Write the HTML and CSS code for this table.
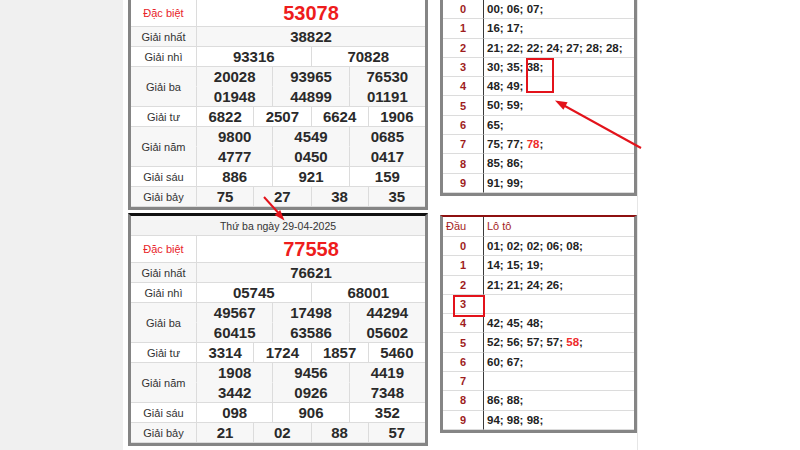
FILE: index.html
```html
<!DOCTYPE html>
<html lang="vi">
<head>
<meta charset="utf-8">
<title>Kết quả xổ số</title>
<link rel="stylesheet" href="styles.css">
</head>
<body>
<div class="screen">
  <aside class="gutter"></aside>
  <main class="content">
    <div class="col-left">
      <div class="kq kq-cut">
        <div class="c lbl red">Đặc biệt</div><div class="c s12 num-db">53078</div>
        <div class="c lbl alt">Giải nhất</div><div class="c s12 num alt">38822</div>
        <div class="c lbl">Giải nhì</div><div class="c s6 num">93316</div><div class="c s6 num">70828</div>
        <div class="c lbl r2 alt">Giải ba</div><div class="c s4 num alt nb">20028</div><div class="c s4 num alt nb">93965</div><div class="c s4 num alt nb">76530</div>
        <div class="c s4 num alt">01948</div><div class="c s4 num alt">44899</div><div class="c s4 num alt">01191</div>
        <div class="c lbl">Giải tư</div><div class="c s3 num">6822</div><div class="c s3 num">2507</div><div class="c s3 num">6624</div><div class="c s3 num">1906</div>
        <div class="c lbl r2 alt">Giải năm</div><div class="c s4 num alt nb">9800</div><div class="c s4 num alt nb">4549</div><div class="c s4 num alt nb">0685</div>
        <div class="c s4 num alt">4777</div><div class="c s4 num alt">0450</div><div class="c s4 num alt">0417</div>
        <div class="c lbl">Giải sáu</div><div class="c s4 num">886</div><div class="c s4 num">921</div><div class="c s4 num">159</div>
        <div class="c lbl alt">Giải bảy</div><div class="c s3 num alt">75</div><div class="c s3 num alt">27</div><div class="c s3 num alt">38</div><div class="c s3 num alt">35</div>
      </div>
      <div class="kq kq-full">
        <div class="c head s13">Thứ ba ngày 29-04-2025</div>
        <div class="c lbl red">Đặc biệt</div><div class="c s12 num-db">77558</div>
        <div class="c lbl alt">Giải nhất</div><div class="c s12 num alt">76621</div>
        <div class="c lbl">Giải nhì</div><div class="c s6 num">05745</div><div class="c s6 num">68001</div>
        <div class="c lbl r2 alt">Giải ba</div><div class="c s4 num alt nb">49567</div><div class="c s4 num alt nb">17498</div><div class="c s4 num alt nb">44294</div>
        <div class="c s4 num alt">60415</div><div class="c s4 num alt">63586</div><div class="c s4 num alt">05602</div>
        <div class="c lbl">Giải tư</div><div class="c s3 num">3314</div><div class="c s3 num">1724</div><div class="c s3 num">1857</div><div class="c s3 num">5460</div>
        <div class="c lbl r2 alt">Giải năm</div><div class="c s4 num alt nb">1908</div><div class="c s4 num alt nb">9456</div><div class="c s4 num alt nb">4419</div>
        <div class="c s4 num alt">3442</div><div class="c s4 num alt">0926</div><div class="c s4 num alt">7348</div>
        <div class="c lbl">Giải sáu</div><div class="c s4 num">098</div><div class="c s4 num">906</div><div class="c s4 num">352</div>
        <div class="c lbl alt">Giải bảy</div><div class="c s3 num alt">21</div><div class="c s3 num alt">02</div><div class="c s3 num alt">88</div><div class="c s3 num alt">57</div>
      </div>
    </div>
    <div class="col-right">
      <div class="lt lt-cut">
        <div class="d">0</div><div class="v">00; 06; 07;</div>
        <div class="d">1</div><div class="v">16; 17;</div>
        <div class="d">2</div><div class="v">21; 22; 22; 24; 27; 28; 28;</div>
        <div class="d">3</div><div class="v">30; 35; 38;</div>
        <div class="d">4</div><div class="v">48; 49;</div>
        <div class="d">5</div><div class="v">50; 59;</div>
        <div class="d">6</div><div class="v">65;</div>
        <div class="d">7</div><div class="v">75; 77; <span class="hot">78</span>;</div>
        <div class="d">8</div><div class="v">85; 86;</div>
        <div class="d">9</div><div class="v">91; 99;</div>
      </div>
      <div class="lt lt-full">
        <div class="h hd">Đầu</div><div class="h hv">Lô tô</div>
        <div class="d">0</div><div class="v">01; 02; 02; 06; 08;</div>
        <div class="d">1</div><div class="v">14; 15; 19;</div>
        <div class="d">2</div><div class="v">21; 21; 24; 26;</div>
        <div class="d">3</div><div class="v"></div>
        <div class="d">4</div><div class="v">42; 45; 48;</div>
        <div class="d">5</div><div class="v">52; 56; 57; 57; <span class="hot">58</span>;</div>
        <div class="d">6</div><div class="v">60; 67;</div>
        <div class="d">7</div><div class="v"></div>
        <div class="d">8</div><div class="v">86; 88;</div>
        <div class="d">9</div><div class="v">94; 98; 98;</div>
      </div>
    </div>
  </main>
  <svg class="marks" width="800" height="450" viewBox="0 0 800 450" aria-hidden="true">
    <rect x="527" y="59" width="26" height="33" fill="none" stroke="#e3131b" stroke-width="2"/>
    <rect x="454" y="296" width="30" height="20" fill="none" stroke="#e3131b" stroke-width="2"/>
    <line x1="641" y1="148" x2="564" y2="105.5" stroke="#e3131b" stroke-width="2"/>
    <polygon points="555,100.5 567.6,102.3 563.4,109.8" fill="#e3131b"/>
    <line x1="264" y1="197" x2="278" y2="212.5" stroke="#e3131b" stroke-width="2"/>
    <polygon points="284.5,220.5 280.2,210 274.6,215" fill="#e3131b"/>
  </svg>
</div>
</body>
</html>
```
FILE: styles.css
```css
* { box-sizing: border-box; }
html, body { margin: 0; padding: 0; }
body {
  background: #ffffff;
  font-family: "Liberation Sans", Arial, sans-serif;
  color: #222;
  overflow: hidden;
}
.screen {
  position: relative;
  width: 800px;
  height: 450px;
  display: flex;
}
.gutter {
  width: 123px;
  flex: none;
  background: #f0f0f0;
}
.content {
  width: 515px;
  flex: none;
  display: flex;
  gap: 12px;
  padding-left: 5px;
  border-right: 1px solid #e6e6e6;
  background: #fff;
}
.col-left {
  width: 300px;
  display: flex;
  flex-direction: column;
  gap: 3px;
}
.col-right {
  width: 197px;
  display: flex;
  flex-direction: column;
  gap: 19px;
}

/* prize tables */
.kq {
  display: grid;
  grid-template-columns: 65px repeat(12, 1fr);
  border-left: 3px solid #858585;
  border-right: 3px solid #858585;
  border-bottom: 3px solid #858585;
  background: #fff;
}
.kq-cut { grid-template-rows: 27px repeat(9, 20px); }
.kq-full {
  grid-template-rows: 20px 27px repeat(9, 20px);
  border-top: 3px solid #111;
}
.c {
  display: flex;
  align-items: center;
  justify-content: center;
  border-bottom: 1px solid #dcdcdc;
  border-left: 1px solid #dcdcdc;
  white-space: nowrap;
}
.lbl {
  border-left: none;
  font-size: 11px;
  color: #333;
}
.red { color: #e8232a; }
.alt { background: #f7f7f7; }
.nb { border-bottom-color: transparent; }
.r2 { grid-row: span 2; }
.s3 { grid-column: span 3; }
.s4 { grid-column: span 4; }
.s6 { grid-column: span 6; }
.s12 { grid-column: span 12; }
.s13 { grid-column: span 13; }
.head {
  border-left: none;
  background: #f4f4f4;
  font-size: 10.5px;
  color: #333;
}
.num {
  font-size: 15px;
  font-weight: bold;
  color: #2a2a2a;
}
.num-db {
  font-size: 20px;
  font-weight: bold;
  color: #ee1c1c;
}

/* loto tables */
.lt {
  display: grid;
  grid-template-columns: 41px 1fr;
  grid-auto-rows: 19.3px;
  border-left: 3px solid #858585;
  border-right: 3px solid #858585;
  border-bottom: 3px solid #858585;
  background: #fff;
}
.lt-full {
  grid-template-rows: 20px;
  border-top: 2px solid #8e1010;
}
.d, .h {
  display: flex;
  align-items: center;
  border-bottom: 1px solid #dcdcdc;
  white-space: nowrap;
}
.v {
  display: block;
  line-height: 18.3px;
  border-bottom: 1px solid #dcdcdc;
  white-space: nowrap;
  padding-left: 3px;
  font-size: 11.5px;
  font-weight: bold;
  color: #222;
}
.d {
  justify-content: center;
  border-right: 1px solid #3a3a3a;
  font-size: 11px;
  font-weight: bold;
  color: #9e1d1d;
}
.h {
  font-size: 11px;
  color: #a31e1e;
}
.hd {
  padding-left: 3px;
  border-right: 1px solid #3a3a3a;
}
.hv { padding-left: 3px; }
.hot { color: #ee2b2b; }

.marks {
  position: absolute;
  left: 0;
  top: 0;
  pointer-events: none;
}
```
